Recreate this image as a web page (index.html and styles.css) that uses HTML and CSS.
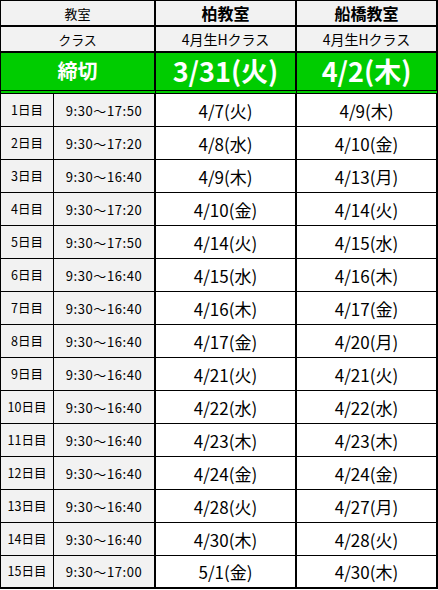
FILE: index.html
```html
<!DOCTYPE html>
<html lang="ja">
<head>
<meta charset="utf-8">
<link rel="stylesheet" href="styles.css">
</head>
<body>
<div class="sheet">
  <div class="c hd span2 small">教室</div>
  <div class="c hd room">柏教室</div>
  <div class="c hd room">船橋教室</div>

  <div class="c hd2 span2 small">クラス</div>
  <div class="c hd2 cls">4月生Hクラス</div>
  <div class="c hd2 cls">4月生Hクラス</div>

  <div class="c green span2 dl-label">締切</div>
  <div class="c green dl">3/31(火)</div>
  <div class="c green dl">4/2(木)</div>

  <div class="c gray day">1日目</div><div class="c gray time">9:30～17:50</div><div class="c date">4/7(火)</div><div class="c date">4/9(木)</div>
  <div class="c gray day">2日目</div><div class="c gray time">9:30～17:20</div><div class="c date">4/8(水)</div><div class="c date">4/10(金)</div>
  <div class="c gray day">3日目</div><div class="c gray time">9:30～16:40</div><div class="c date">4/9(木)</div><div class="c date">4/13(月)</div>
  <div class="c gray day">4日目</div><div class="c gray time">9:30～17:20</div><div class="c date">4/10(金)</div><div class="c date">4/14(火)</div>
  <div class="c gray day">5日目</div><div class="c gray time">9:30～17:50</div><div class="c date">4/14(火)</div><div class="c date">4/15(水)</div>
  <div class="c gray day">6日目</div><div class="c gray time">9:30～16:40</div><div class="c date">4/15(水)</div><div class="c date">4/16(木)</div>
  <div class="c gray day">7日目</div><div class="c gray time">9:30～16:40</div><div class="c date">4/16(木)</div><div class="c date">4/17(金)</div>
  <div class="c gray day">8日目</div><div class="c gray time">9:30～16:40</div><div class="c date">4/17(金)</div><div class="c date">4/20(月)</div>
  <div class="c gray day">9日目</div><div class="c gray time">9:30～16:40</div><div class="c date">4/21(火)</div><div class="c date">4/21(火)</div>
  <div class="c gray day">10日目</div><div class="c gray time">9:30～16:40</div><div class="c date">4/22(水)</div><div class="c date">4/22(水)</div>
  <div class="c gray day">11日目</div><div class="c gray time">9:30～16:40</div><div class="c date">4/23(木)</div><div class="c date">4/23(木)</div>
  <div class="c gray day">12日目</div><div class="c gray time">9:30～16:40</div><div class="c date">4/24(金)</div><div class="c date">4/24(金)</div>
  <div class="c gray day">13日目</div><div class="c gray time">9:30～16:40</div><div class="c date">4/28(火)</div><div class="c date">4/27(月)</div>
  <div class="c gray day">14日目</div><div class="c gray time">9:30～16:40</div><div class="c date">4/30(木)</div><div class="c date">4/28(火)</div>
  <div class="c gray day last">15日目</div><div class="c gray time last">9:30～17:00</div><div class="c date last">5/1(金)</div><div class="c date last">4/30(木)</div>
</div>
</body>
</html>
```

FILE: styles.css
```css
html, body {
  margin: 0;
  padding: 0;
  background: #ffffff;
}

.sheet {
  display: grid;
  grid-template-columns: 53px 102px 141px 141px;
  grid-auto-rows: 33px;
  grid-template-rows: 26px 26px 41px;
  width: 438px;
  box-sizing: border-box;
  border-top: 1px solid #000;
  border-left: 1px solid #000;
  font-family: "Noto Sans CJK JP", "Noto Sans", sans-serif;
  color: #000;
}

.c {
  box-sizing: border-box;
  display: flex;
  align-items: center;
  justify-content: center;
  border-right: 2px solid #000;
  border-bottom: 1px solid #000;
  white-space: nowrap;
  line-height: 1;
}

.span2 { grid-column: span 2; }

.hd, .hd2 {
  background: #f2f2f2;
  border-bottom: 2px solid #000;
}

.small { font-size: 13px; }
.room { font-size: 16px; font-weight: 700; }
.cls { font-size: 14px; }

.green {
  background: #00cc00;
  color: #ffffff;
  font-weight: 700;
  border-bottom: 4px double #000;
  padding-bottom: 2px;
}
.dl-label { font-size: 20px; }
.dl { font-size: 27px; }

.gray { background: #f2f2f2; }
.day { font-size: 12.5px; border-right: 1px solid #000; }
.time { font-size: 13px; letter-spacing: 0.6px; }
.date { font-size: 17px; background: #ffffff; }

.last { border-bottom: 2px solid #000; }
```
